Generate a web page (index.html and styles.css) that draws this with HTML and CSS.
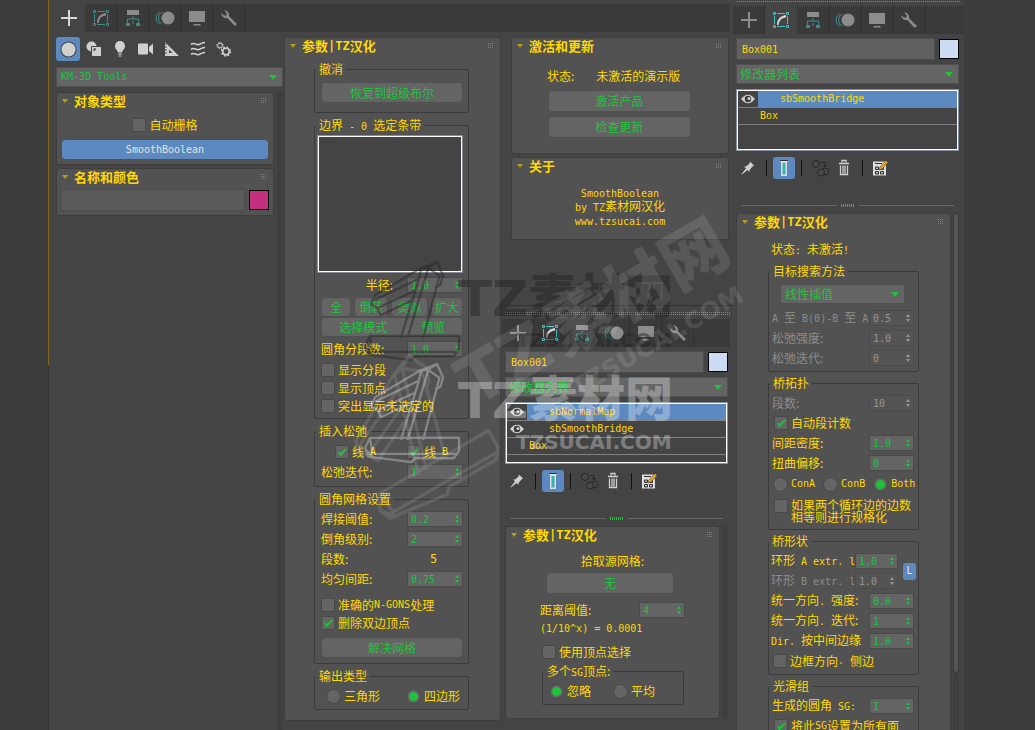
FILE: index.html
```html
<!DOCTYPE html>
<html lang="zh-CN">
<head>
<meta charset="utf-8">
<title>SmoothBoolean</title>
<link rel="stylesheet" href="styles.css">
</head>
<body>
<svg class="defs" aria-hidden="true">
  <symbol id="i-plus" viewBox="0 0 24 24"><path d="M12 4v16M4 12h16" fill="none" stroke="currentColor" stroke-width="2"/></symbol>
  <symbol id="i-modify" viewBox="0 0 24 24"><path d="M8 5.500h8M8 18.500h8M5.500 8v8M18.500 8v8M4.500 4.500h2v2h-2zM17.500 4.500h2v2h-2zM4.500 17.500h2v2h-2zM17.500 17.500h2v2h-2z" fill="none" stroke="var(--teal)"/><path d="M8 17C8 11 11 8 17 7v2.500C12.500 10 10.500 12 9.500 17z" fill="currentColor"/></symbol>
  <symbol id="i-tree" viewBox="0 0 24 24"><path d="M6 4h12v5H6z" fill="currentColor"/><path d="M12 10v4M6.500 17v-4h11v4M12 15v3" fill="none" stroke="var(--teal)"/><path d="M5 17h4v3H5zM15 17h4v3h-4z" fill="var(--teal)"/></symbol>
  <symbol id="i-motion" viewBox="0 0 24 24"><path d="M7 6a6.500 6.500 0 0 0 0 12M9.500 6a6.500 6.500 0 0 0 0 12" fill="none" stroke="var(--teal)"/><circle cx="15" cy="12" r="6.500" fill="currentColor"/></symbol>
  <symbol id="i-display" viewBox="0 0 24 24"><path d="M4 5h16v11H4zM9 18h6l1 1.500H8z" fill="currentColor"/></symbol>
  <symbol id="i-wrench" viewBox="0 0 24 24"><path d="M7 4.200 9.500 7v2.500H7L4.200 7A5 5 0 0 0 10.300 12l7.500 8 2.200-2-8-7.700A5 5 0 0 0 7 4.200z" fill="currentColor"/></symbol>
  <symbol id="i-sphere" viewBox="0 0 24 24"><circle cx="12.500" cy="12.500" r="8" fill="#444"/><circle cx="12.500" cy="12.500" r="7" fill="currentColor"/></symbol>
  <symbol id="i-shapes" viewBox="0 0 24 24"><circle cx="9.500" cy="9.500" r="5" fill="currentColor"/><path d="M9.500 9.500h10v10h-10z" fill="currentColor" stroke="#444"/><path d="M11.500 14.500V11.500H14.500A6 6 0 0 1 11.500 14.500z" fill="#444"/></symbol>
  <symbol id="i-bulb" viewBox="0 0 24 24"><path d="M12 4a5 5 0 0 0-5 5c0 3 2.500 4 3 6.500h4c.500-2.500 3-3.500 3-6.500a5 5 0 0 0-5-5zM10 16.500h4v1h-4zM10.500 18.500h3v1h-3z" fill="currentColor"/></symbol>
  <symbol id="i-camera" viewBox="0 0 24 24"><rect x="4" y="6.500" width="10" height="11" rx="1" fill="currentColor"/><path d="M15 10l4-3.500v11L15 14z" fill="currentColor"/></symbol>
  <symbol id="i-ruler" viewBox="0 0 24 24"><path d="M5 5l14 14H5zM9 12.500V16h3.500z" fill="currentColor" fill-rule="evenodd"/><path d="M5 7h2M5 10h2M5 13h2M5 16h2" stroke="#444"/></symbol>
  <symbol id="i-waves" viewBox="0 0 24 24"><path d="M5 7.500c3-3 5 1 8 0s3-2 6-2M5 12.500c3-3 5 1 8 0s3-2 6-2M5 17.500c3-3 5 1 8 0s3-2 6-2" fill="none" stroke="currentColor" stroke-width="1.500"/></symbol>
  <symbol id="i-gears" viewBox="0 0 24 24"><g fill="none" stroke="currentColor"><circle cx="8" cy="8.500" r="2.300"/><circle cx="8" cy="8.500" r="3.200" stroke-dasharray="1.300 1.210"/><circle cx="14" cy="14.500" r="3.200" stroke-width="1.500"/><circle cx="14" cy="14.500" r="4.400" stroke-dasharray="1.800 1.650" stroke-width="1.500"/></g></symbol>
  <symbol id="i-eye" viewBox="0 0 14 12"><path d="M0 6Q7-2.500 14 6 7 14.500 0 6z" fill="currentColor"/><circle cx="7" cy="6" r="3.200" fill="#3a3a3a"/><circle cx="8" cy="5.500" r="1.500" fill="currentColor"/></symbol>
  <symbol id="i-pin" viewBox="0 0 24 24"><path d="M14 5.500l4 4-1.500 1-3 3.500v2l-2-2L6 18.500l-.500-.500 4.500-5.500-2-2h2l3.500-3z" fill="currentColor"/></symbol>
  <symbol id="i-tube" viewBox="0 0 24 24"><path d="M8 4h8v2h-1v14H9V6H8z" fill="#ddd"/><path d="M10.500 7h3v11.500h-3z" fill="#35b5b3"/><path d="M8 4.500h8" stroke="#333"/></symbol>
  <symbol id="i-unique" viewBox="0 0 24 24"><g fill="#484848" stroke="#262626"><circle cx="8" cy="8" r="3.500"/><circle cx="17" cy="15.500" r="3.500"/><circle cx="13" cy="16.500" r="3.500"/><path d="M13 6.500h4V11m-2-2 2 2 2-2" fill="none"/></g></symbol>
  <symbol id="i-trash" viewBox="0 0 24 24"><path d="M10 6.500v-2h4v2M7 7.500h10M8.500 9.500v9h7v-9M11 9.500v8M13 9.500v8" fill="none" stroke="currentColor" stroke-width="1.300"/></symbol>
  <symbol id="i-sets" viewBox="0 0 24 24"><path d="M4 5.500h13v14H4z" fill="#ddd"/><path d="M6 7.500h7M6.500 11h3v2.500h-3zM11.500 11h3v2.500h-3zM6.500 15.500h3V18h-3zM11.500 15.500h3V18h-3z" fill="#bbb" stroke="#333"/><path d="M10 14l1-3 6-6.500 2 2-6 6.500z" fill="#f5a417" stroke="#333" stroke-width=".500"/></symbol>
  <symbol id="i-beam" viewBox="0 0 400 800" overflow="visible"><g fill="none" stroke="currentColor" stroke-width="7" stroke-linejoin="round"><path d="M93 590l12-28 135-80 52-20 18 40-8 28-14 8M95 590l18 10 112-52M105 575l130-62M113 600l10 22 95-46"/><path d="M245 480l-10 40-52 170M266 478l-63 212M300 500l-50 190M240 482l24-4 36 26M292 462l-28 16"/><path d="M75 715l15-31 268-1v40l-16 22H225l-10 12-130-17zM90 684l8 48h258M75 715l26 30"/></g></symbol>
</svg>

<div class="app">
  <section class="create">
    <nav class="tabs" aria-label="面板">
      <button class="tab on" aria-label="创建"><svg><use href="#i-plus"/></svg></button>
      <button class="tab" aria-label="修改"><svg><use href="#i-modify"/></svg></button>
      <button class="tab" aria-label="层次"><svg><use href="#i-tree"/></svg></button>
      <button class="tab" aria-label="运动"><svg><use href="#i-motion"/></svg></button>
      <button class="tab" aria-label="显示"><svg><use href="#i-display"/></svg></button>
      <button class="tab" aria-label="实用程序"><svg><use href="#i-wrench"/></svg></button>
    </nav>

    <div class="columns">
      <div class="objects">
        <div class="kinds">
          <button class="kind on" aria-label="几何体"><svg><use href="#i-sphere"/></svg></button>
          <button class="kind" aria-label="图形"><svg><use href="#i-shapes"/></svg></button>
          <button class="kind" aria-label="灯光"><svg><use href="#i-bulb"/></svg></button>
          <button class="kind" aria-label="摄影机"><svg><use href="#i-camera"/></svg></button>
          <button class="kind" aria-label="辅助对象"><svg><use href="#i-ruler"/></svg></button>
          <button class="kind" aria-label="空间扭曲"><svg><use href="#i-waves"/></svg></button>
          <button class="kind" aria-label="系统"><svg><use href="#i-gears"/></svg></button>
        </div>
        <div class="drop"><select class="la" aria-label="类别"><option>KM-3D Tools</option></select></div>
        <div class="scroller">
          <div class="stack">
            <section class="rollout">
              <h2>对象类型</h2>
              <label class="check mid"><input type="checkbox">自动栅格</label>
              <button class="btn primary la">SmoothBoolean</button>
            </section>
            <section class="rollout">
              <h2>名称和颜色</h2>
              <div class="name-row">
                <input class="field" type="text" aria-label="名称"><button class="swatch pink" aria-label="颜色"></button>
              </div>
            </section>
          </div>
          <div class="track"></div>
        </div>
      </div>

      <section class="rollout params">
        <h2>参数<span class="la">|TZ</span>汉化</h2>
        <fieldset>
          <legend>撤消</legend>
          <button class="btn restore">恢复到超级布尔</button>
        </fieldset>
        <fieldset class="edges">
          <legend>边界<span class="la"> - 0 </span>选定条带</legend>
          <div class="strips" role="listbox" aria-label="选定条带"></div>
          <div class="row radius"><label for="rad">半径:</label><span class="spin"><input id="rad" value="1.0"></span></div>
          <div class="quad"><button class="btn">全</button><button class="btn">倒转</button><button class="btn">类似</button><button class="btn">扩大</button></div>
          <div class="pair"><button class="btn">选择模式</button><button class="btn">预览</button></div>
          <div class="row"><label for="seg">圆角分段数:</label><span class="spin"><input id="seg" value="1.0"></span></div>
          <label class="check"><input type="checkbox">显示分段</label>
          <label class="check"><input type="checkbox">显示顶点</label>
          <label class="check"><input type="checkbox">突出显示未选定的</label>
        </fieldset>
        <fieldset class="relax">
          <legend>插入松弛</legend>
          <div class="row lines">
            <label class="check"><input type="checkbox" checked>线<span class="la"> A</span></label>
            <label class="check"><input type="checkbox" checked>线<span class="la"> B</span></label>
          </div>
          <div class="row"><label for="it">松弛迭代:</label><span class="spin"><input id="it" value="1"></span></div>
        </fieldset>
        <fieldset class="mesh">
          <legend>圆角网格设置</legend>
          <div class="row"><label for="weld">焊接阈值:</label><span class="spin"><input id="weld" value="0.2"></span></div>
          <div class="row"><label for="lvl">倒角级别:</label><span class="spin"><input id="lvl" value="2"></span></div>
          <div class="row"><span>段数:</span><output class="la count">5</output></div>
          <div class="row"><label for="even">均匀间距:</label><span class="spin"><input id="even" value="0.75"></span></div>
          <div class="checks">
            <label class="check"><input type="checkbox">准确的<span class="la">N-GONS</span>处理</label>
            <label class="check"><input type="checkbox" checked>删除双边顶点</label>
          </div>
          <button class="btn">解决网格</button>
        </fieldset>
        <fieldset class="output">
          <legend>输出类型</legend>
          <div class="row">
            <label class="radio"><input type="radio" name="out">三角形</label>
            <label class="radio"><input type="radio" name="out" checked>四边形</label>
          </div>
        </fieldset>
      </section>

      <div class="third">
        <div class="about-stack">
          <section class="rollout activate">
            <h2>激活和更新</h2>
            <p class="status"><span>状态:</span><span>未激活的演示版</span></p>
            <button class="btn">激活产品</button>
            <button class="btn">检查更新</button>
          </section>
          <section class="rollout about">
            <h2>关于</h2>
            <p><span class="la">SmoothBoolean</span></p>
            <p><span class="la">by TZ</span>素材网汉化</p>
            <p><span class="la">www.tzsucai.com</span></p>
          </section>
        </div>
        <section class="modify lower">
          <div class="grip-top"></div>
          <nav class="tabs" aria-label="面板">
            <button class="tab" aria-label="创建"><svg><use href="#i-plus"/></svg></button>
            <button class="tab lit" aria-label="修改"><svg><use href="#i-modify"/></svg></button>
            <button class="tab" aria-label="层次"><svg><use href="#i-tree"/></svg></button>
            <button class="tab" aria-label="运动"><svg><use href="#i-motion"/></svg></button>
            <button class="tab" aria-label="显示"><svg><use href="#i-display"/></svg></button>
            <button class="tab" aria-label="实用程序"><svg><use href="#i-wrench"/></svg></button>
          </nav>
          <div class="body">
            <div class="name-row"><input class="field la" type="text" value="Box001" aria-label="名称"><button class="swatch" aria-label="颜色"></button></div>
            <div class="drop"><select aria-label="修改器列表"><option>修改器列表</option></select></div>
            <ul class="mods">
              <li class="on"><svg class="eye"><use href="#i-eye"/></svg><span class="la">sbNormalMap</span></li>
              <li><svg class="eye"><use href="#i-eye"/></svg><span class="la">sbSmoothBridge</span></li>
              <li class="base"><span class="la">Box</span></li>
            </ul>
            <div class="tools">
              <button aria-label="锁定"><svg><use href="#i-pin"/></svg></button><i></i>
              <button class="on" aria-label="显示最终结果"><svg><use href="#i-tube"/></svg></button><i></i>
              <button aria-label="使唯一"><svg><use href="#i-unique"/></svg></button>
              <button aria-label="删除"><svg><use href="#i-trash"/></svg></button><i></i>
              <button aria-label="配置"><svg><use href="#i-sets"/></svg></button>
            </div>
            <div class="splitter"><i></i></div>
            <div class="scroller">
              <section class="rollout normal">
                <h2>参数<span class="la">|TZ</span>汉化</h2>
                <p class="pick">拾取源网格:</p>
                <button class="btn">无</button>
                <div class="row"><label for="dist">距离阈值:</label><span class="spin"><input id="dist" value="4"></span></div>
                <p class="la formula">(1/10^x) = 0.0001</p>
                <label class="check"><input type="checkbox">使用顶点选择</label>
                <fieldset>
                  <legend>多个<span class="la">SG</span>顶点:</legend>
                  <div class="row">
                    <label class="radio"><input type="radio" name="sg" checked>忽略</label>
                    <label class="radio"><input type="radio" name="sg">平均</label>
                  </div>
                </fieldset>
              </section>
              <div class="track"></div>
            </div>
          </div>
        </section>
      </div>
    </div>
  </section>

  <section class="modify right">
    <div class="grip-top"></div>
    <nav class="tabs" aria-label="面板">
      <button class="tab" aria-label="创建"><svg><use href="#i-plus"/></svg></button>
      <button class="tab on lit" aria-label="修改"><svg><use href="#i-modify"/></svg></button>
      <button class="tab" aria-label="层次"><svg><use href="#i-tree"/></svg></button>
      <button class="tab" aria-label="运动"><svg><use href="#i-motion"/></svg></button>
      <button class="tab" aria-label="显示"><svg><use href="#i-display"/></svg></button>
      <button class="tab" aria-label="实用程序"><svg><use href="#i-wrench"/></svg></button>
    </nav>
    <div class="body">
      <div class="name-row"><input class="field la" type="text" value="Box001" aria-label="名称"><button class="swatch" aria-label="颜色"></button></div>
      <div class="drop"><select aria-label="修改器列表"><option>修改器列表</option></select></div>
      <ul class="mods">
        <li class="on"><svg class="eye"><use href="#i-eye"/></svg><span class="la">sbSmoothBridge</span></li>
        <li class="base"><span class="la">Box</span></li>
      </ul>
      <div class="tools">
        <button aria-label="锁定"><svg><use href="#i-pin"/></svg></button><i></i>
        <button class="on" aria-label="显示最终结果"><svg><use href="#i-tube"/></svg></button><i></i>
        <button aria-label="使唯一"><svg><use href="#i-unique"/></svg></button>
        <button aria-label="删除"><svg><use href="#i-trash"/></svg></button><i></i>
        <button aria-label="配置"><svg><use href="#i-sets"/></svg></button>
      </div>
      <div class="splitter"><i></i></div>
      <div class="scroller">
        <section class="rollout bridge">
          <h2>参数<span class="la">|TZ</span>汉化</h2>
          <p class="state">状态<span class="la">: </span>未激活<span class="la">!</span></p>
          <fieldset class="target">
            <legend>目标搜索方法</legend>
            <div class="drop"><select aria-label="目标搜索方法"><option>线性插值</option></select></div>
            <div class="row off"><label for="ab"><span class="la">A </span>至<span class="la"> B(0)-B </span>至<span class="la"> A</span></label><span class="spin"><input id="ab" value="0.5" disabled></span></div>
            <div class="row off"><label for="rs">松弛强度:</label><span class="spin"><input id="rs" value="1.0" disabled></span></div>
            <div class="row off"><label for="ri">松弛迭代:</label><span class="spin"><input id="ri" value="0" disabled></span></div>
          </fieldset>
          <fieldset>
            <legend>桥拓扑</legend>
            <div class="row off"><label for="sn">段数:</label><span class="spin"><input id="sn" value="10" disabled></span></div>
            <label class="check"><input type="checkbox" checked>自动段计数</label>
            <div class="row"><label for="dn">间距密度:</label><span class="spin"><input id="dn" value="1.0"></span></div>
            <div class="row"><label for="tw">扭曲偏移:</label><span class="spin"><input id="tw" value="0"></span></div>
            <div class="row la con">
              <label class="radio"><input type="radio" name="con">ConA</label>
              <label class="radio"><input type="radio" name="con">ConB</label>
              <label class="radio"><input type="radio" name="con" checked>Both</label>
            </div>
            <label class="check wrap"><input type="checkbox"><span>如果两个循环边的边数<br>相等则进行规格化</span></label>
          </fieldset>
          <fieldset class="shape">
            <legend>桥形状</legend>
            <div class="linked">
              <div>
                <div class="row"><label for="ra">环形<span class="la"> A extr. l</span></label><span class="spin"><input id="ra" value="1.0"></span></div>
                <div class="row off"><label for="rb">环形<span class="la"> B extr. l</span></label><span class="spin"><input id="rb" value="1.0" disabled></span></div>
              </div>
              <button class="lock la">L</button>
            </div>
            <div class="row"><label for="us">统一方向<span class="la">. </span>强度:</label><span class="spin"><input id="us" value="0.0"></span></div>
            <div class="row"><label for="ui">统一方向<span class="la">. </span>迭代:</label><span class="spin"><input id="ui" value="1"></span></div>
            <div class="row"><label for="dm"><span class="la">Dir. </span>按中间边缘</label><span class="spin"><input id="dm" value="1.0"></span></div>
            <label class="check"><input type="checkbox">边框方向<span class="la">. </span>侧边</label>
          </fieldset>
          <fieldset>
            <legend>光滑组</legend>
            <div class="row"><label for="sg">生成的圆角<span class="la"> SG:</span></label><span class="spin"><input id="sg" value="1"></span></div>
            <label class="check"><input type="checkbox" checked>将此<span class="la">SG</span>设置为所有面</label>
          </fieldset>
        </section>
        <div class="track"><div class="thumb"></div></div>
      </div>
    </div>
  </section>

  <svg class="mark" viewBox="0 0 420 320" aria-hidden="true">
    <g class="dark">
      <use href="#i-beam" width="133" height="267" y="-102"/>
      <text class="logo" x="118" y="106">TZ</text><text class="han" x="189" y="104">素材网</text>
      <text class="site" x="176" y="137">TZSUCAI.COM</text>
    </g>
    <g class="light">
      <use href="#i-beam" width="133" height="267"/>
      <text class="logo" x="118" y="208">TZ</text><text class="han" x="189" y="206">素材网</text>
      <text class="site" x="176" y="239">TZSUCAI.COM</text>
    </g>
    <g class="ghost">
      <g transform="translate(40 300) rotate(-30) scale(1.42) translate(-25 -238)"><use href="#i-beam" width="133" height="267"/></g>
      <g transform="translate(145 192) rotate(-30)"><text class="logo big" x="-12" y="0">TZ</text><text class="han big" x="90" y="0">素材网</text><text class="site big" x="82" y="42">TZSUCAI.COM</text></g>
    </g>
  </svg>
</div>
</body>
</html>
```
FILE: styles.css
```css
:root {
  --bg: #444;
  --dark: #3a3a3a;
  --panel: #525252;
  --line: #3d3d3d;
  --ctl: #646464;
  --yellow: #ffd800;
  --green: #1fc33b;
  --blue: #5c89c0;
  --teal: #3d8c89;
}
* { box-sizing: border-box; }
body {
  margin: 0;
  background: #3d3d3d;
  color: var(--yellow);
  font: 12px/14px "Noto Sans CJK SC", sans-serif;
}
p, h2, ul { margin: 0; padding: 0; font-weight: normal; }
button, input, select { font: inherit; color: inherit; margin: 0; padding: 0; border: 0; background: none; border-radius: 0; }
.la { font-family: "DejaVu Sans Mono", "Noto Sans CJK SC", monospace; font-size: 10px; white-space: pre; }
.defs { position: absolute; width: 0; height: 0; }

.app {
  position: relative;
  display: grid;
  grid-template-columns: 48fr 685fr 231fr 71fr;
  height: 100vh;
  overflow: hidden;
}
.create {
  grid-column: 2;
  display: flex;
  flex-direction: column;
  padding-top: 4px;
  background: var(--bg);
  border-left: 1px solid;
  border-image: linear-gradient(#80661c 50%, #333 50%) 1;
  min-height: 0;
}
.create > .tabs { margin: 0 3px 0 4px; }
.columns {
  flex: 1;
  display: grid;
  grid-template-columns: minmax(0, 235fr) minmax(0, 217fr) minmax(0, 232fr);
  align-items: start;
}

/* tabs */
.tabs { display: flex; height: 28px; background: var(--dark); }
.tab {
  display: grid;
  place-items: center;
  width: 32px;
  color: #8c8c8c;
  border-right: 1px solid #303030;
}
.tab svg { width: 24px; height: 24px; }
.tab.on { background: var(--bg); color: #d8d8d8; border-right-color: var(--bg); }
.tab.lit { --teal: #4cc3c3; color: #d8d8d8; }

/* object list */
.objects { display: flex; flex-direction: column; padding: 5px 1px 0 7px; height: calc(100vh - 32px); }
.kinds { display: flex; gap: 2px; color: #d0d0d0; }
.kind { width: 24px; height: 24px; border-radius: 3px; }
.kind svg { display: block; width: 24px; height: 24px; }
.kind.on { background: var(--blue); }
.objects > .drop { margin-top: 6px; }
.objects .scroller { margin-top: 5px; flex: 1; gap: 3px; }
.objects .track { width: 6px; background: #3e3e3e; }
.stack { flex: 1; display: flex; flex-direction: column; gap: 3px; }
.stack .rollout { padding-left: 4px; padding-right: 4px; padding-bottom: 4px; }
.stack .check { margin: 6px 0 5px; justify-content: center; }
.stack .name-row { margin-top: 3px; }
.scroller { display: flex; min-height: 0; }

/* rollouts */
.rollout {
  display: flex;
  flex-direction: column;
  background: var(--panel);
  border: 1px solid var(--line);
  border-radius: 3px;
}
.rollout > h2 {
  display: flex;
  align-items: center;
  height: 15px;
  margin-bottom: 2px;
  font-size: 13px;
  font-weight: bold;
}
.rollout > h2 .la { font-size: 12px; }
.rollout > h2::before {
  content: "";
  margin: 0 6px 0 5px;
  border: 3px solid transparent;
  border-top: 4px solid #b59d20;
  border-bottom: 0;
}
.stack .rollout > h2::before { margin-left: 1px; }
.rollout > h2::after {
  content: "";
  width: 6px;
  height: 6px;
  margin: 0 7px 0 auto;
  background: repeating-conic-gradient(#93843a 0 25%, transparent 0 100%) 0 0 / 2px 2px;
}
.stack .rollout > h2::after { margin-right: 3px; }

/* controls */
.btn {
  height: 21px;
  background: var(--ctl);
  border: 1px solid #505050;
  border-radius: 4px;
  color: var(--green);
  line-height: 18px;
  white-space: nowrap;
}
.btn.primary { background: var(--blue); color: #e4e4e4; }
.drop { position: relative; display: flex; }
.drop select {
  appearance: none;
  flex: 1;
  min-width: 0;
  height: 20px;
  padding-left: 4px;
  background: var(--ctl);
  border: 1px solid #505050;
  color: var(--green);
}
.drop::after {
  content: "";
  position: absolute;
  right: 6px;
  top: 8px;
  border: 4px solid transparent;
  border-top: 5px solid var(--green);
  border-bottom: 0;
}
.name-row { display: flex; gap: 4px; align-items: center; }
.field {
  flex: 1;
  min-width: 0;
  height: 22px;
  padding: 0 5px;
  background: #5a5a5a;
  border: 1px solid #4c4c4c;
}
.swatch { width: 20px; height: 20px; border: 1px solid #000; background: #cbdcf4; }
.swatch.pink { background: #c33080; }
.check, .radio { display: flex; align-items: center; white-space: nowrap; }
.check { height: 18px; }
.radio { gap: 3px; }
.check input {
  appearance: none;
  width: 14px;
  height: 14px;
  flex: none;
  margin-right: 3px;
  background: var(--ctl);
  border: 1px solid #494949;
}
.check input:checked::before {
  content: "";
  display: block;
  height: 12px;
  background: var(--green);
  clip-path: polygon(15% 42%, 38% 56%, 84% 20%, 90% 32%, 40% 84%, 28% 80%);
}
.radio input {
  appearance: none;
  width: 15px;
  height: 15px;
  flex: none;
  border: 1px solid #494949;
  border-radius: 50%;
  background: var(--ctl);
}
.radio input:checked { background: radial-gradient(circle, var(--green) 4px, var(--ctl) 5px); }
.row { display: flex; align-items: center; height: 20px; }
.row > label:first-child:not(.radio):not(.check), .row > span:first-child { flex: 1; min-width: 0; white-space: nowrap; }
.spin { position: relative; flex: none; width: 46px; height: 16px; }
.spin input {
  display: block;
  width: 100%;
  height: 16px;
  padding: 0 14px 0 3px;
  background: var(--ctl);
  border: 1px solid #4a4a4a;
  color: var(--green);
  font: 10px/14px "DejaVu Sans Mono", monospace;
}
.spin::before, .spin::after {
  content: "";
  position: absolute;
  right: 4px;
  border: 2px solid transparent;
}
.spin::before { top: 4px; border-bottom: 3px solid var(--green); border-top: 0; }
.spin::after { bottom: 4px; border-top: 3px solid var(--green); border-bottom: 0; }
.off { color: #8c8c8c; }
.off .spin input { background: #545454; color: #969696; }
.off .spin::before { border-bottom-color: #969696; }
.off .spin::after { border-top-color: #969696; }
fieldset {
  display: block;
  min-width: 0;
  margin: 0 0 5px;
  padding: 3px 5px 3px 6px;
  border: 1px solid #3b3b3b;
  border-radius: 2px;
}
legend { height: 14px; margin-left: -5px; padding: 0 3px; white-space: pre; }
fieldset .btn { display: block; width: 100%; }

/* boolean parameters */
.params { margin-top: 5px; padding-bottom: 5px; }
.params > fieldset { margin-left: 29px; margin-right: 31px; }
.params > h2 { margin-bottom: 9px; }
.params .restore { margin: 3px 0 6px; }
.params .spin { width: 56px; }
.strips { height: 138px; margin: 0 0 2px -4px; background: var(--bg); border: 1px solid #8a8a94; outline: 1px solid #fff; outline-offset: -2px; }
.radius label { text-align: right; padding-right: 14px; }
.quad { display: grid; grid-template-columns: 30fr 34fr 36fr 32fr; gap: 3px; padding-top: 2px; }
.pair { display: grid; grid-template-columns: 84fr 59fr; margin-bottom: 2px; }
.params .quad .btn, .params .pair .btn { height: 20px; }
.pair .btn:first-child { border-right: 0; border-radius: 4px 0 0 4px; }
.pair .btn:last-child { border-left: 0; border-radius: 0 4px 4px 0; }
.edges .row:not(.radius) { margin-bottom: 2px; }
.relax { padding-top: 4px; padding-bottom: 4px; }
.lines { padding-left: 14px; }
.lines .check { width: 72px; flex: none; }
.mesh .count { width: 33px; font-size: 12px; }
.mesh .checks { margin: 7px 0 5px; }
.mesh { padding-bottom: 5px; }
.output .radio { width: 80px; flex: none; padding-left: 5px; }

/* activation */
.about-stack { display: flex; flex-direction: column; gap: 3px; margin: 0 4px 0 10px; padding-top: 5px; height: 273px; }
.third { min-width: 0; }
.activate { padding-bottom: 11px; }
.activate .btn { width: 66%; height: 22px; margin: 0 0 4px 36px; }
.status { display: flex; gap: 22px; margin: 14px 0 7px 35px; }
.about { padding-bottom: 12px; }
.about p { height: 14px; text-align: center; }
.about h2 { margin-bottom: 12px; }

/* modifier panel */
.modify { background: var(--bg); min-width: 0; min-height: 0; }
.modify.right { grid-column: 3; height: 100vh; overflow: hidden; }
.modify.lower { border-top: 1px solid #333; padding-top: 6px; }
.grip-top { height: 3px; margin: 0 3px 0 4px; background: repeating-linear-gradient(90deg, #a48c19 0 1px, transparent 1px 2px) 0 0 / 100% 1px, repeating-linear-gradient(90deg, #a48c19 0 1px, transparent 1px 2px) 0 2px / 100% 1px; background-repeat: no-repeat; }
.right .grip-top { background: repeating-linear-gradient(90deg, #a48c19 0 1px, transparent 1px 2px) 0 1px / 100% 1px no-repeat; }
.modify .tabs { margin: 3px 0 0; }
.lower .tabs { margin: 4px 3px 0 1px; }
.body { padding: 4px 5px 0 3px; }
.lower .body { padding-left: 4px; }
.body > .name-row .field { background: #606060; }
.body > .drop { margin-top: 4px; }
.body > .drop select { padding-left: 3px; }
.mods {
  height: 62px;
  margin-top: 5px;
  border: 1px solid #8590a0;
  outline: 1px solid #fff;
  outline-offset: -2px;
  padding: 1px;
  list-style: none;
}
.mods li { display: flex; align-items: center; height: 17px; border-bottom: 1px solid #808080; }
.mods .eye { width: 20px; height: 12px; padding: 0 3px; color: #d0d0d0; }
.mods li span { padding-left: 22px; }
.mods .on span { flex: 1; background: var(--blue); line-height: 16px; }
.tools { display: flex; align-items: center; height: 24px; margin-top: 5px; color: #d0d0d0; }
.tools button { width: 24px; height: 24px; border-radius: 3px; }
.tools .on { width: 22px; height: 22px; background: var(--blue); }
.tools .on svg { margin-left: -1px; margin-top: -1px; }
.tools svg { display: block; width: 24px; height: 24px; }
.tools i { width: 1px; height: 16px; margin: 0 6px; background: #111; }
.splitter { display: flex; height: 3px; margin: 24px 5px 6px; background: linear-gradient(#666, #666) 0 1px / 100% 1px no-repeat; justify-content: center; }
.splitter i { width: 14px; border: solid var(--bg); border-width: 0 4px; box-sizing: content-box; background: repeating-linear-gradient(90deg, var(--green) 0 1px, var(--bg) 1px 2px) 0 0 / 100% 1px repeat-y; }
.body .rollout { flex: 1; min-width: 0; }
.body .track { width: 6px; margin-left: 2px; background: #3e3e3e; border-radius: 3px; }
.thumb { height: 460px; border: 1px solid #3b3b3b; border-radius: 3px; background: #555; }

/* normal map */
.normal { padding-bottom: 7px; }
.normal .pick { margin: 10px 0 4px; text-align: center; }
.normal > .btn { width: 60%; margin: 0 auto 6px 40px; height: 22px; }
.normal > .row { margin: 0 34px 0 34px; }
.formula { margin: 1px 0 6px 34px; height: 16px; line-height: 16px; }
.normal > .check { margin-left: 36px; }
.normal fieldset { margin: 3px 35px 6px 36px; }
.normal .radio { width: 64px; flex: none; }

/* bridge */
.bridge > fieldset { margin: 0 31px 4px 31px; padding: 3px 4px 3px 3px; }
.bridge > fieldset.shape { padding-left: 2px; }
.bridge legend { margin-left: -2px; }
.bridge .spin { width: 45px; }
.bridge .linked .spin { width: 43px; }
.state { margin: 11px 0 6px 34px; }
.bridge .target .drop { margin: 3px 9px 4px 8px; }
.bridge .check { height: 20px; margin-left: 2px; }
.con { height: 22px; gap: 8px; padding-left: 1px; }
.bridge .wrap { height: auto; align-items: start; margin: 4px 0 3px 2px; line-height: 12px; }
.bridge .wrap span { margin-right: -8px; }
.linked { display: flex; align-items: center; gap: 5px; margin-right: -2px; }
.linked > div { flex: 1; min-width: 0; }
.lock { width: 13px; height: 17px; border-radius: 3px; background: var(--blue); color: #e4e4e4; }

/* watermark */
.mark { position: absolute; left: 340px; top: 210px; width: 420px; height: 320px; overflow: visible; pointer-events: none; }
.mark text { fill: currentColor; }
.logo, .site { font-family: "DejaVu Sans", sans-serif; font-weight: bold; }
.logo { font-size: 50px; }
.han { font-family: "Noto Sans CJK SC", sans-serif; font-weight: 900; font-size: 48px; }
.site { font-size: 20px; }
.logo.big { font-size: 68px; }
.han.big { font-size: 66px; }
.site.big { font-size: 25px; }
.dark { color: #222; opacity: 0.45; }
.light { color: #fff; opacity: 0.3; }
.ghost { color: #fff; opacity: 0.11; }
```
